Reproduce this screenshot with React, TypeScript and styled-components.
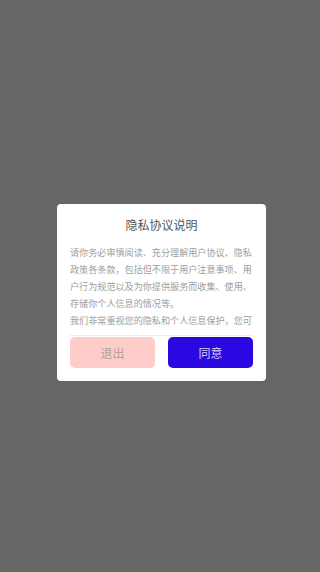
import React from 'react'
import styled, { createGlobalStyle } from 'styled-components'

const GlobalStyle = createGlobalStyle`
  html, body {
    margin: 0;
    padding: 0;
    height: 100%;
  }
  body {
    font-family: "Noto Sans CJK SC", "Noto Sans", sans-serif;
    background: #666666;
  }
  #root {
    height: 100%;
  }
`

const Overlay = styled.div`
  height: 572px;
  display: flex;
  justify-content: center;
  align-items: center;
  padding: 12px 0 0 3px;
  box-sizing: border-box;
  background: #666666;
`

const Dialog = styled.div`
  width: 209px;
  box-sizing: border-box;
  padding: 12px 13px 13px;
  background: #ffffff;
  border-radius: 4px;
  display: flex;
  flex-direction: column;
`

const Title = styled.h2`
  margin: 0 0 11px;
  font-size: 12px;
  line-height: 17px;
  font-weight: 400;
  color: #555555;
  text-align: center;
`

const ContentWrap = styled.div`
  padding-bottom: 6px;
  border-bottom: 1px solid #ededed;
`

const ScrollBox = styled.div`
  height: 85px;
  overflow: hidden;
`

const Paragraph = styled.p`
  margin: 0;
  font-size: 9.1px;
  line-height: 17.1px;
  color: #9e9e9e;
`

const Actions = styled.div`
  display: flex;
  gap: 13px;
  margin-top: 1px;
`

const ActionButton = styled.button<{ primary?: boolean }>`
  flex: 1;
  height: 31px;
  border: none;
  border-radius: 5px;
  font-family: inherit;
  font-size: 12px;
  background: ${props => (props.primary ? '#2b07e1' : '#ffcdc9')};
  color: ${props => (props.primary ? '#d4ccf6' : '#b59e9c')};
  padding: 0;
`

const App = () => {
    return (
        <>
            <GlobalStyle />
            <Overlay>
                <Dialog>
                    <Title>隐私协议说明</Title>

                    {/* 协议内容 */}
                    <ContentWrap>
                        <ScrollBox>
                            <Paragraph>
                                请你务必审慎阅读、充分理解用户协议、隐私政策各条款，包括但不限于用户注意事项、用户行为规范以及为你提供服务而收集、使用、存储你个人信息的情况等。
                            </Paragraph>
                            <Paragraph>
                                我们非常重视您的隐私和个人信息保护，您可以在阅读完整协议后选择同意或退出，我们将严格按照协议内容为您提供服务。
                            </Paragraph>
                        </ScrollBox>
                    </ContentWrap>

                    <Actions>
                        <ActionButton>退出</ActionButton>
                        <ActionButton primary>同意</ActionButton>
                    </Actions>
                </Dialog>
            </Overlay>
        </>
    )
}

export default App
